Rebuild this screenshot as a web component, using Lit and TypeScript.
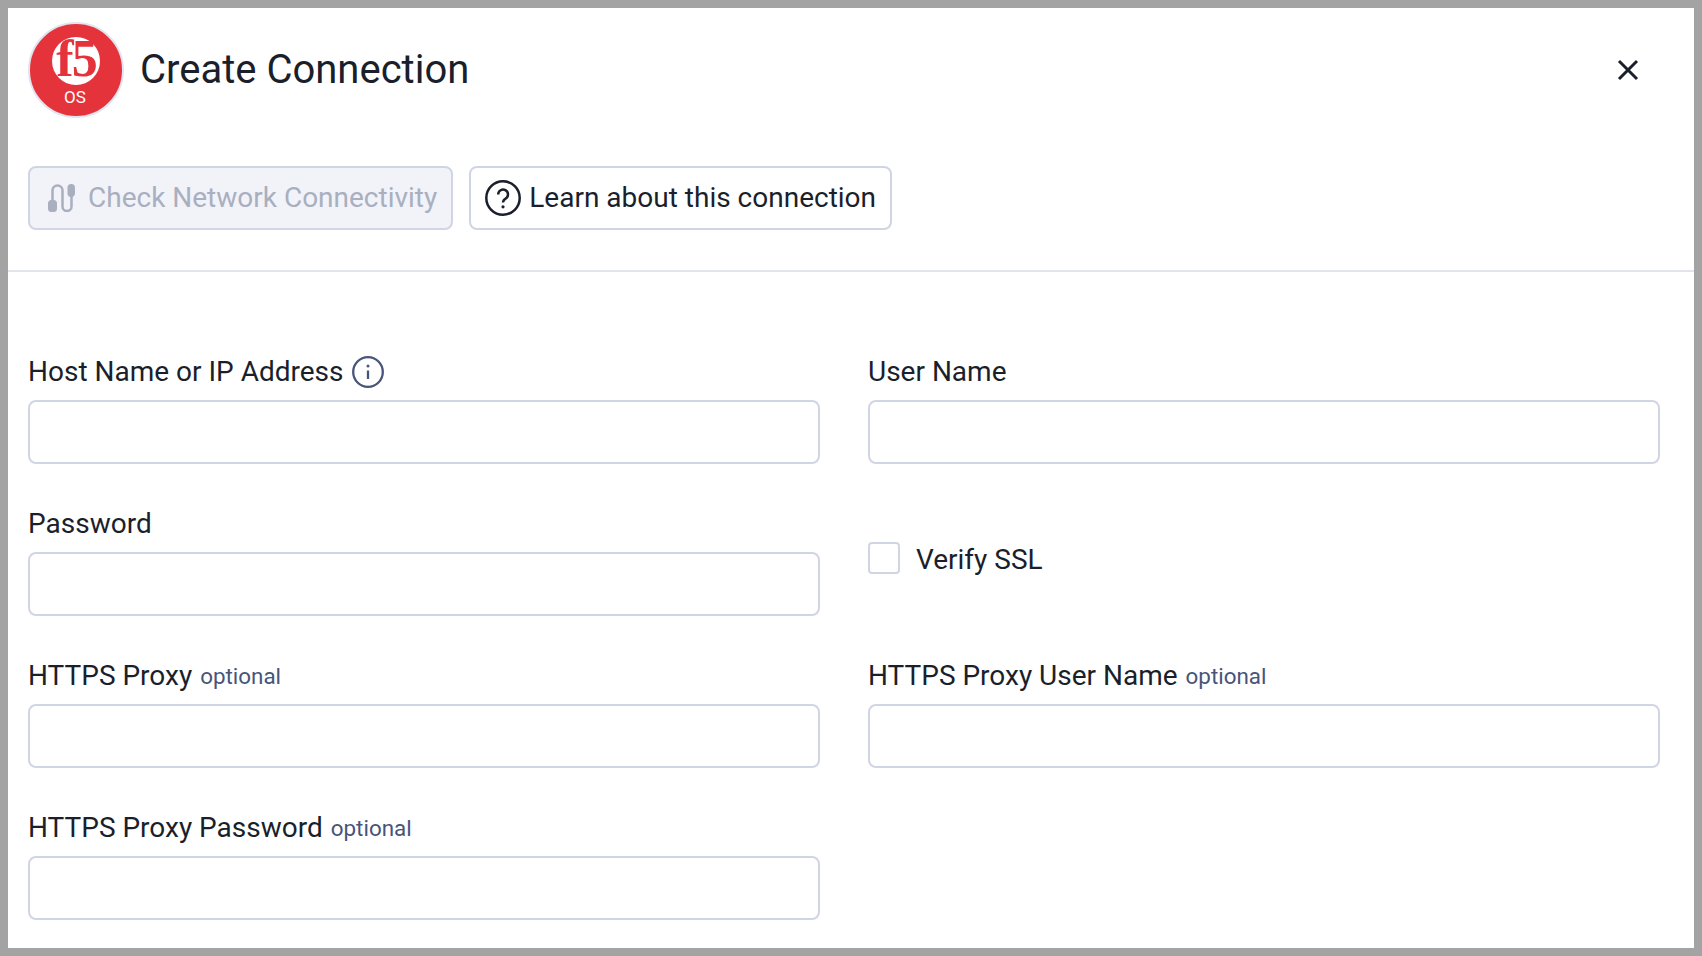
import { LitElement, html, css } from "lit";
import { customElement } from "lit/decorators.js";

const logo = html`<svg class="logo" viewBox="0 0 96 96" aria-label="F5 OS logo">
  <circle cx="48" cy="48" r="47" fill="#e5333c" stroke="#e1e4ee" stroke-width="2"></circle>
  <circle cx="48" cy="39" r="24" fill="#fff"></circle>
  <text x="48" y="54" text-anchor="middle" class="f5">f5</text>
  <text x="47" y="81" text-anchor="middle" class="os">OS</text>
</svg>`;

const cable = html`<svg class="ic" width="28" height="28" viewBox="0 0 28 28" fill="none">
  <rect x="0" y="16" width="9" height="12" rx="3.500" fill="#a9afbf"></rect>
  <rect x="19.500" y="0" width="7.500" height="13" rx="3.700" fill="#a9afbf"></rect>
  <path d="M4.500 17V6.500a5 5 0 0 1 10 0v16a4.500 4.500 0 0 0 9 0V12" stroke="#a9afbf" stroke-width="2.500"></path>
</svg>`;

const question = html`<svg class="ic" width="36" height="36" viewBox="0 0 36 36" fill="none">
  <circle cx="18" cy="18" r="16.700" stroke="#1b1f2c" stroke-width="2.500"></circle>
  <path d="M13.200 14.400a4.900 4.900 0 1 1 7.600 4.100c-1.900 1.200-2.800 2-2.800 4" stroke="#1b1f2c" stroke-width="2.500"></path>
  <circle cx="18" cy="26.800" r="1.600" fill="#1b1f2c"></circle>
</svg>`;

const info = html`<svg class="info" width="32" height="32" viewBox="0 0 32 32" fill="none">
  <circle cx="16" cy="16" r="14.800" stroke="#47557a" stroke-width="2.300"></circle>
  <path d="M16 14.500V23" stroke="#47557a" stroke-width="2.300"></path>
  <circle cx="16" cy="10" r="1.500" fill="#47557a"></circle>
</svg>`;

const closeIcon = html`<svg width="22" height="22" viewBox="0 0 22 22" fill="none">
  <path d="M2 2l18 18M20 2L2 20" stroke="#1b1f2c" stroke-width="3"></path>
</svg>`;

@customElement("app-root")
export class AppRoot extends LitElement {
  static styles = css`
    :host {
      display: block;
      height: 956px;
      box-sizing: border-box;
      padding: 8px;
      background: #a3a3a3;
      font-family: Roboto, "Liberation Sans", sans-serif;
      color: #1b1f2c;
      overflow: hidden;
    }
    .panel {
      height: 940px;
      background: #fff;
      overflow: hidden;
    }
    .head {
      display: flex;
      align-items: center;
      height: 96px;
      padding: 14px 55px 0 20px;
    }
    .logo {
      width: 96px;
      height: 96px;
      flex: none;
    }
    .f5 {
      font-family: "Liberation Serif", serif;
      font-weight: 700;
      font-size: 52px;
      letter-spacing: -2px;
      fill: #e5333c;
    }
    .os {
      font-family: Roboto, sans-serif;
      font-size: 17px;
      fill: #fff;
    }
    h1 {
      margin: 0 0 2px 16px;
      font-size: 40px;
      font-weight: 400;
      flex: 1;
    }
    .close {
      display: flex;
      padding: 0;
      border: 0;
      background: none;
    }
    .actions {
      display: flex;
      gap: 16px;
      padding: 48px 20px 40px;
      border-bottom: 2px solid #e1e4ea;
    }
    .btn {
      display: flex;
      align-items: center;
      height: 64px;
      box-sizing: border-box;
      border: 2px solid #d0d5e3;
      border-radius: 8px;
      background: #fff;
      font: 400 28px Roboto, sans-serif;
      color: #1b1f2c;
      padding: 0 14px 2px 14px;
      gap: 8px;
    }
    .btn .ic {
      margin-bottom: -2px;
    }
    .btn.off {
      background: #f1f3f9;
      color: #a9afbf;
      padding: 0 14px 2px 18px;
      gap: 12px;
    }
    .form {
      display: grid;
      grid-template-columns: 792px 792px;
      column-gap: 48px;
      row-gap: 40px;
      padding: 80px 20px 0;
    }
    .field label {
      display: flex;
      align-items: center;
      gap: 8px;
      height: 40px;
      box-sizing: border-box;
      padding-bottom: 2px;
      margin-bottom: 8px;
      font-size: 28px;
    }
    .opt {
      font-size: 22.4px;
      color: #47557a;
      padding-top: 1px;
    }
    .info {
      margin-bottom: -2px;
    }
    .input {
      display: block;
      width: 100%;
      height: 64px;
      box-sizing: border-box;
      border: 2px solid #d0d5e3;
      border-radius: 8px;
      background: #fff;
    }
    .check {
      display: flex;
      align-items: center;
      gap: 16px;
      align-self: start;
      margin-top: 35px;
      font-size: 28px;
    }
    .check-text {
      padding-top: 4px;
    }
    .box {
      width: 32px;
      height: 32px;
      box-sizing: border-box;
      border: 2px solid #d0d5e3;
      border-radius: 4px;
    }
  `;

  private field(label: string, optional = false, withInfo = false) {
    return html`<div class="field">
      <label>${label}${withInfo ? info : ""}${optional ? html`<span class="opt">optional</span>` : ""}</label>
      <input class="input" type="text" />
    </div>`;
  }

  render() {
    return html`<div class="panel">
      <div class="head">
        ${logo}
        <h1>Create Connection</h1>
        <button class="close" aria-label="Close">${closeIcon}</button>
      </div>
      <div class="actions">
        <button class="btn off" disabled>${cable}Check Network Connectivity</button>
        <button class="btn">${question}Learn about this connection</button>
      </div>
      <div class="form">
        ${this.field("Host Name or IP Address", false, true)}
        ${this.field("User Name")}
        ${this.field("Password")}
        <div class="check"><span class="box"></span><span class="check-text">Verify SSL</span></div>
        ${this.field("HTTPS Proxy", true)}
        ${this.field("HTTPS Proxy User Name", true)}
        ${this.field("HTTPS Proxy Password", true)}
      </div>
    </div>`;
  }
}
